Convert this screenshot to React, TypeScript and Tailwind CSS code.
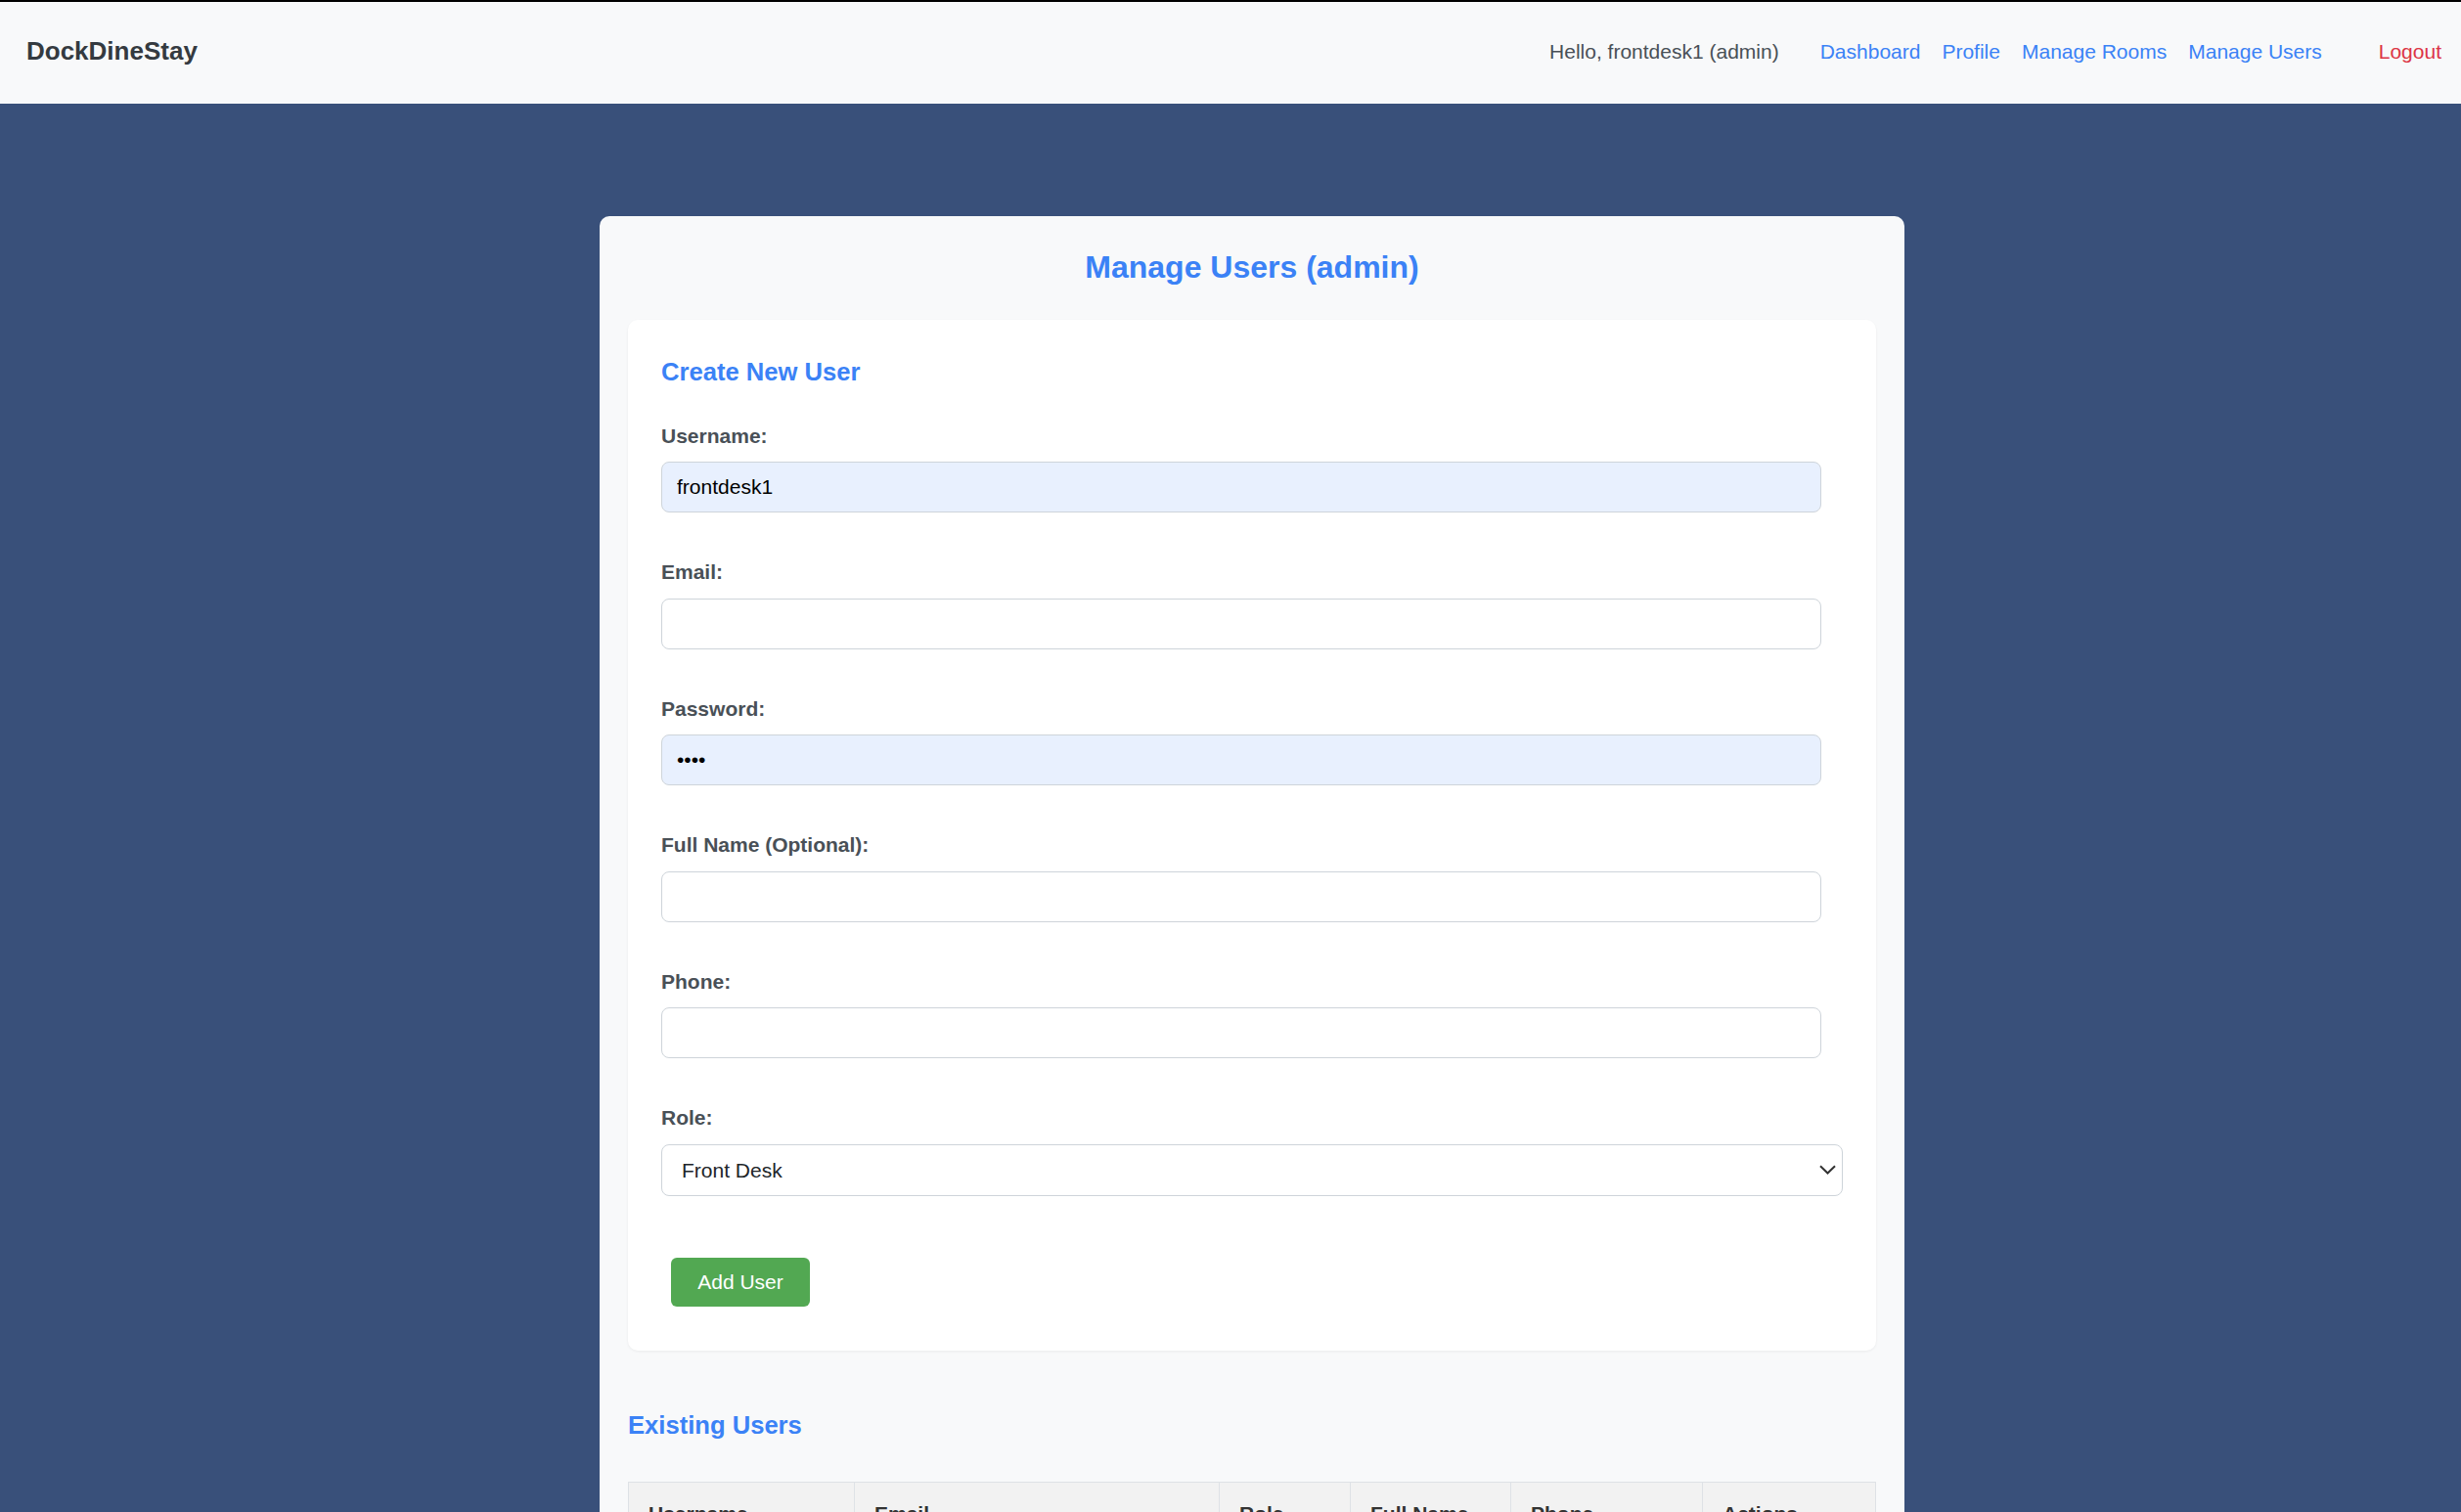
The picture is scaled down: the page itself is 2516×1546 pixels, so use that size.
import { useState } from 'react';

interface Field {
  label: string;
  type: string;
  value: string;
  autofill?: boolean;
}

const fields: Field[] = [
  { label: 'Username:', type: 'text', value: 'frontdesk1', autofill: true },
  { label: 'Email:', type: 'email', value: '' },
  { label: 'Password:', type: 'password', value: '1234', autofill: true },
  { label: 'Full Name (Optional):', type: 'text', value: '' },
  { label: 'Phone:', type: 'tel', value: '' },
];

const users = [
  { username: 'admin', email: 'admin@dockdinestay.com', role: 'admin', fullName: 'Site Admin', phone: '555-0100' },
  { username: 'frontdesk1', email: 'frontdesk1@dockdinestay.com', role: 'admin', fullName: '', phone: '' },
];

export default function App() {
  const [role, setRole] = useState('frontdesk');

  return (
    <div className="min-h-screen bg-[#39507a] font-['Liberation_Sans',Arial,sans-serif]">
      {/* Header */}
      <header className="flex h-[106px] items-center justify-between border-t-2 border-black bg-[#f8f9fa] pr-[20px] pb-[3px] pl-[27px]">
        <div className="text-[26px] font-bold text-[#343a40]">DockDineStay</div>
        <nav className="flex items-center text-[21px]">
          <span className="mr-[42px] text-[#495057]">Hello, frontdesk1 (admin)</span>
          <a href="#" className="text-[#3b82f6]">Dashboard</a>
          <a href="#" className="ml-[22px] text-[#3b82f6]">Profile</a>
          <a href="#" className="ml-[22px] text-[#3b82f6]">Manage Rooms</a>
          <a href="#" className="ml-[22px] text-[#3b82f6]">Manage Users</a>
          <a href="#" className="ml-[58px] text-[#dc3545]">Logout</a>
        </nav>
      </header>

      <main className="pt-[115px] pb-[60px]">
        <div className="ml-[613px] w-[1334px] rounded-[10px] bg-[#f8f9fa] px-[29px] pt-[33px] pb-[40px]">
          <h1 className="text-center text-[32px] leading-[38px] font-bold text-[#3b82f6]">Manage Users (admin)</h1>

          {/* Create form */}
          <section className="mt-[35px] rounded-[10px] bg-white px-[34px] pt-[38px] pb-[45px] shadow-[0_1px_3px_rgba(0,0,0,0.06)]">
            <h2 className="mb-[38.5px] text-[25.6px] leading-[30px] font-bold text-[#3b82f6]">Create New User</h2>

            {fields.map((f) => (
              <div key={f.label} className="mb-[49.1px]">
                <label className="mb-[14.5px] block text-[21px] leading-[24px] font-bold text-[#495057]">{f.label}</label>
                <input
                  type={f.type}
                  defaultValue={f.value}
                  className={`block h-[52px] w-[1186px] rounded-[8px] border border-[#ced4da] px-[15px] text-[21px] text-black outline-none ${
                    f.autofill ? 'bg-[#e8f0fe]' : 'bg-white'
                  }`}
                />
              </div>
            ))}

            <div>
              <label className="mb-[14.5px] block text-[21px] leading-[24px] font-bold text-[#495057]">Role:</label>
              <div className="relative">
                <select
                  value={role}
                  onChange={(e) => setRole(e.target.value)}
                  className="block h-[53px] w-full appearance-none rounded-[8px] border border-[#ced4da] bg-white pl-[20px] text-[21px] text-[#212529] outline-none"
                >
                  <option value="frontdesk">Front Desk</option>
                  <option value="admin">Admin</option>
                  <option value="guest">Guest</option>
                </select>
                <svg
                  className="pointer-events-none absolute top-1/2 right-[7px] -translate-y-1/2"
                  width="17"
                  height="10"
                  viewBox="0 0 17 10"
                  fill="none"
                >
                  <path d="M1 1.2 L8.5 8.5 L16 1.2" stroke="#333" strokeWidth="2" />
                </svg>
              </div>
            </div>

            <button className="mt-[63px] ml-[10px] h-[50px] w-[142px] rounded-[6px] bg-[#52a852] text-[21px] text-white">
              Add User
            </button>
          </section>

          {/* Existing users */}
          <h2 className="mt-[61px] mb-[43px] text-[25.6px] leading-[30px] font-bold text-[#3b82f6]">Existing Users</h2>

          <table className="w-full table-fixed border-collapse text-[21px] leading-[24px]">
            <thead>
              <tr className="bg-[#f2f2f2]">
                <th className="w-[231px] border border-[#dee2e6] px-[20px] py-[20px] text-left font-bold text-[#333]">Username</th>
                <th className="w-[373px] border border-[#dee2e6] px-[20px] py-[20px] text-left font-bold text-[#333]">Email</th>
                <th className="w-[134px] border border-[#dee2e6] px-[20px] py-[20px] text-left font-bold text-[#333]">Role</th>
                <th className="w-[164px] border border-[#dee2e6] px-[20px] py-[20px] text-left font-bold text-[#333]">Full Name</th>
                <th className="w-[196px] border border-[#dee2e6] px-[20px] py-[20px] text-left font-bold text-[#333]">Phone</th>
                <th className="border border-[#dee2e6] px-[20px] py-[20px] text-left font-bold text-[#333]">Actions</th>
              </tr>
            </thead>
            <tbody>
              {users.map((u) => (
                <tr key={u.username} className="bg-white">
                  <td className="border border-[#dee2e6] px-[20px] py-[20px] text-[#333]">{u.username}</td>
                  <td className="border border-[#dee2e6] px-[20px] py-[20px] text-[#333]">{u.email}</td>
                  <td className="border border-[#dee2e6] px-[20px] py-[20px] text-[#333]">{u.role}</td>
                  <td className="border border-[#dee2e6] px-[20px] py-[20px] text-[#333]">{u.fullName || 'N/A'}</td>
                  <td className="border border-[#dee2e6] px-[20px] py-[20px] text-[#333]">{u.phone || 'N/A'}</td>
                  <td className="border border-[#dee2e6] px-[20px] py-[20px]">
                    <button className="rounded-[6px] bg-[#dc3545] px-[14px] py-[6px] text-white">Delete</button>
                  </td>
                </tr>
              ))}
            </tbody>
          </table>
        </div>
      </main>
    </div>
  );
}
